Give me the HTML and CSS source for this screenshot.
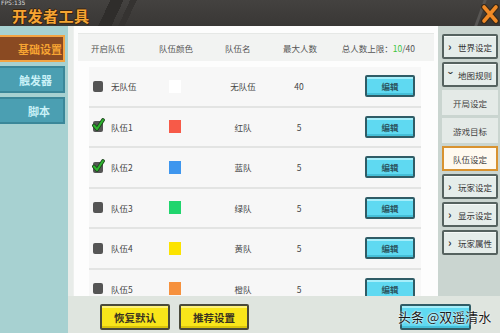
FILE: index.html
```html
<!DOCTYPE html>
<html lang="zh">
<head>
<meta charset="utf-8">
<link rel="stylesheet" href="styles.css">
</head>
<body>
<div class="app">
  <header class="topbar">
    <span class="fps">FPS:135</span>
    <h1 class="title">开发者工具</h1>
    <span class="slash"></span>
    <button class="close" aria-label="关闭">
      <svg width="18" height="20" viewBox="0 0 18 20">
        <path d="M3 3 L15 17 M15 3 L3 17" stroke="#3a2a1a" stroke-width="6" stroke-linecap="round"/>
        <path d="M3 3 L15 17 M15 3 L3 17" stroke="#f08a26" stroke-width="3.6" stroke-linecap="round"/>
      </svg>
    </button>
  </header>
  <div class="content">
    <nav class="side">
      <div class="tab active">基础设置</div>
      <div class="tab">触发器</div>
      <div class="tab">脚本</div>
    </nav>
    <div class="work">
      <div class="upper">
        <section class="panel">
          <div class="thead">
            <span class="h1">开启队伍</span>
            <span class="h2">队伍颜色</span>
            <span class="h3">队伍名</span>
            <span class="h4">最大人数</span>
            <span class="total">总人数上限：<b>10</b>/40</span>
          </div>
          <div class="rows">
            <div class="row">
              <span class="team"><i class="box"></i>无队伍</span>
              <span class="swatch white"></span>
              <span class="name">无队伍</span>
              <span class="num">40</span>
              <span class="spacer"></span>
              <span class="edit">编辑</span>
            </div>
            <div class="row">
              <span class="team"><i class="box checked"><svg width="13" height="14" viewBox="0 0 13 14"><path d="M2 7.5 L5 11 L11 2" fill="none" stroke="#1d4a1d" stroke-width="3.8" stroke-linejoin="round" stroke-linecap="round"/><path d="M2 7.5 L5 11 L11 2" fill="none" stroke="#30b530" stroke-width="2" stroke-linejoin="round" stroke-linecap="round"/></svg></i>队伍1</span>
              <span class="swatch red"></span>
              <span class="name">红队</span>
              <span class="num">5</span>
              <span class="spacer"></span>
              <span class="edit">编辑</span>
            </div>
            <div class="row">
              <span class="team"><i class="box checked"><svg width="13" height="14" viewBox="0 0 13 14"><path d="M2 7.5 L5 11 L11 2" fill="none" stroke="#1d4a1d" stroke-width="3.8" stroke-linejoin="round" stroke-linecap="round"/><path d="M2 7.5 L5 11 L11 2" fill="none" stroke="#30b530" stroke-width="2" stroke-linejoin="round" stroke-linecap="round"/></svg></i>队伍2</span>
              <span class="swatch blue"></span>
              <span class="name">蓝队</span>
              <span class="num">5</span>
              <span class="spacer"></span>
              <span class="edit">编辑</span>
            </div>
            <div class="row">
              <span class="team"><i class="box"></i>队伍3</span>
              <span class="swatch green"></span>
              <span class="name">绿队</span>
              <span class="num">5</span>
              <span class="spacer"></span>
              <span class="edit">编辑</span>
            </div>
            <div class="row">
              <span class="team"><i class="box"></i>队伍4</span>
              <span class="swatch yellow"></span>
              <span class="name">黄队</span>
              <span class="num">5</span>
              <span class="spacer"></span>
              <span class="edit">编辑</span>
            </div>
            <div class="row">
              <span class="team"><i class="box"></i>队伍5</span>
              <span class="swatch orange"></span>
              <span class="name">橙队</span>
              <span class="num">5</span>
              <span class="spacer"></span>
              <span class="edit">编辑</span>
            </div>
          </div>
        </section>
        <aside class="menu">
          <div class="mitem"><span class="chev">›</span>世界设定</div>
          <div class="mitem"><span class="chev down">›</span>地图规则</div>
          <div class="sub">开局设定</div>
          <div class="sub">游戏目标</div>
          <div class="sub current">队伍设定</div>
          <div class="mitem"><span class="chev">›</span>玩家设定</div>
          <div class="mitem"><span class="chev">›</span>显示设定</div>
          <div class="mitem"><span class="chev">›</span>玩家属性</div>
        </aside>
      </div>
      <footer class="footer">
        <span class="ybtn">恢复默认</span>
        <span class="ybtn">推荐设置</span>
        <span class="cbtn"></span>
        <span class="watermark">头条 @双遥清水</span>
      </footer>
    </div>
  </div>
</div>
</body>
</html>
```

FILE: styles.css
```css
* { box-sizing: border-box; margin: 0; padding: 0; }
html, body { width: 500px; height: 333px; overflow: hidden; }
body { font-family: "Noto Sans CJK SC", "Noto Sans", sans-serif; color: #444; background: #dfe5df; }

.app { width: 500px; height: 333px; display: flex; flex-direction: column; }

.topbar {
  position: relative;
  height: 26px;
  flex: none;
  display: flex;
  align-items: center;
  padding-left: 12px;
  background:
    linear-gradient(115deg, transparent 0 100px, #2f2d2b 100px 112px, transparent 112px 118px, #353331 118px 124px, transparent 124px),
    linear-gradient(180deg, #444240, #393735);
}
.fps { position: absolute; left: 1px; top: 0; font-size: 6px; line-height: 6px; color: #d8d8d8; font-family: "DejaVu Sans", sans-serif; }
.title {
  font-size: 15px; font-weight: 700; color: #f6a532; letter-spacing: 0.5px;
  text-shadow: 1px 1px 0 #3a2410, -1px 0 0 #3a2410, 0 -1px 0 #3a2410;
  margin-top: 5px; line-height: 18px;
}
.slash {
  position: absolute; right: 18px; top: 0; width: 3px; height: 26px;
  background: #575553; transform: skewX(-20deg);
}
.close {
  position: absolute; right: 1px; top: 4px; width: 18px; height: 20px;
  background: none; border: 0; display: block;
}
.close svg { display: block; }

.content { flex: 1; display: flex; min-height: 0; }

.side {
  width: 68px; flex: none; background: #a7d1d1;
  display: flex; flex-direction: column; gap: 4px; padding-top: 9px;
}
.tab {
  width: 65px; height: 27px; display: flex; align-items: center; justify-content: flex-end;
  padding-right: 11px; font-size: 11px; font-weight: 700;
  background: #4b9fb2; color: #c9f1f7; border: 2px solid #3b8799; border-left: 0;
}
.tab:nth-child(3) { padding-right: 13px; }
.tab.active { background: #8a4a22; color: #f7a432; border: 2px solid #f3a443; border-left: 0; padding-right: 1px; }

.work { flex: 1; display: flex; flex-direction: column; background: #dfe5df; }
.upper { height: 270px; display: flex; padding-left: 5px; background: linear-gradient(90deg, #e8ece9 0 5px, transparent 5px); }

.panel { width: 365px; background: #fdfdfd; overflow: hidden; padding-top: 7px; border-left: 1px solid #eef0ee; }
.thead {
  margin: 0 4px; height: 28px; background: #f2f3f2; border-top: 1px solid #e6e8e6;
  display: flex; align-items: center; padding-left: 13px; padding-right: 19px;
  font-size: 8.5px; color: #555;
}
.h1 { width: 68px; }
.h2 { width: 66px; }
.h3 { width: 58px; }
.h4 { flex: 1; }
.total { color: #555; }
.total b { color: #3ec43e; font-weight: 400; }

.rows {
  margin: 6px 0 0 15px; width: 332px; background: #e3e4e3;
  display: flex; flex-direction: column; gap: 2px;
}
.row {
  height: 38.5px; flex: none; background: #f7f7f7;
  display: grid; grid-template-columns: 80px 45px 58px 54px 39px 50px; align-items: center;
  font-size: 8.5px; color: #444;
}
.team { display: flex; align-items: center; padding-left: 4px; gap: 8px; }
.box { width: 10px; height: 11px; background: #555; border-radius: 2px; display: block; position: relative; flex: none; }
.box.checked svg { position: absolute; left: -1px; top: -3px; }
.swatch { width: 12px; height: 13px; display: block; }
.swatch.white { background: #ffffff; }
.swatch.red { background: #f75a48; }
.swatch.blue { background: #3e96ee; }
.swatch.green { background: #20d56d; }
.swatch.yellow { background: #fce300; }
.swatch.orange { background: #f6913d; }
.name { text-align: center; }
.num { text-align: center; }
.edit {
  height: 22px; display: flex; align-items: center; justify-content: center;
  background: #5fd9f1; border: 2px solid #2f5c66; border-radius: 2px;
  box-shadow: inset 0 2px 0 #a6eefa, inset 0 -2px 0 #45bfd8;
  font-size: 8.5px; font-weight: 700; color: #2c5561;
}

.menu {
  width: 62px; background: #cad5d0; padding: 8px 0 0 4px;
  display: flex; flex-direction: column; gap: 3px;
}
.mitem, .sub {
  width: 56px; height: 25px; display: flex; align-items: center; font-size: 8.5px; color: #333;
}
.mitem {
  background: #e5edea; border: 2px solid #55625f; border-radius: 2px; padding-left: 4px;
  box-shadow: inset 0 1px 0 #f6faf8;
}
.chev { display: inline-block; width: 10px; font-size: 11px; font-weight: 700; line-height: 1; color: #333; }
.chev.down { transform: rotate(90deg); width: 7px; margin-right: 3px; }
.sub { justify-content: center; background: #e4eae7; color: #444; }
.sub.current { background: #fff9ef; border: 2px solid #d8922f; }

.footer { position: relative; height: 37px; display: flex; align-items: flex-start; padding: 8px 0 0 32px; }
.ybtn {
  width: 70px; height: 26px; display: flex; align-items: center; justify-content: center; margin-right: 9px;
  background: #f8e51a; border: 2px solid #4a4a3a; border-radius: 2px;
  box-shadow: inset 0 2px 0 #fdf27a, inset 0 -2px 0 #d9c40c;
  font-size: 10.5px; font-weight: 700; color: #3a3320;
}
.cbtn {
  margin-left: 142px; width: 71px; height: 26px;
  background: #5fd9f1; border: 2px solid #2f5c66; border-radius: 2px;
  box-shadow: inset 0 2px 0 #a6eefa, inset 0 -2px 0 #45bfd8;
}
.watermark {
  position: absolute; left: 330px; top: 11px; font-size: 13px; color: #1a1a1a;
  text-shadow: 0 0 2px #fff, 0 0 2px #fff;
}
```
